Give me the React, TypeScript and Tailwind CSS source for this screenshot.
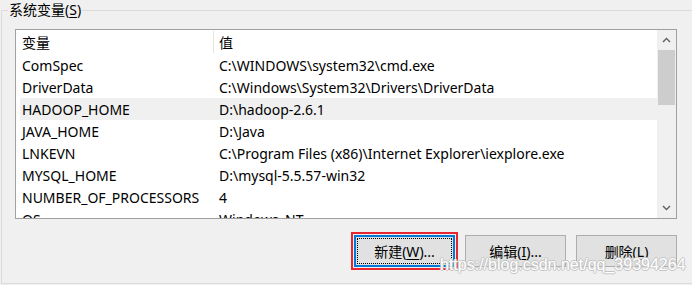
import React from "react";

const rows: [string, string][] = [
  ["ComSpec", "C:\\WINDOWS\\system32\\cmd.exe"],
  ["DriverData", "C:\\Windows\\System32\\Drivers\\DriverData"],
  ["HADOOP_HOME", "D:\\hadoop-2.6.1"],
  ["JAVA_HOME", "D:\\Java"],
  ["LNKEVN", "C:\\Program Files (x86)\\Internet Explorer\\iexplore.exe"],
  ["MYSQL_HOME", "D:\\mysql-5.5.57-win32"],
  ["NUMBER_OF_PROCESSORS", "4"],
  ["OS", "Windows_NT"],
];

const font = "font-['Noto_Sans','Noto_Sans_CJK_SC',sans-serif]";

function Chevron({ up }: { up: boolean }) {
  return (
    <svg width="9" height="6" viewBox="0 0 9 6" className="block">
      <path
        d={up ? "M1 5 L4.5 1.5 L8 5" : "M1 1 L4.5 4.5 L8 1"}
        fill="none"
        stroke="#606060"
        strokeWidth="1.4"
      />
    </svg>
  );
}

export default function App() {
  return (
    <div
      className={`relative w-[692px] h-[285px] bg-[#f0f0f0] pt-[10px] pl-[1px] overflow-hidden text-[14px] text-black ${font}`}
    >
      <div className="relative w-[700px] h-[274px] border border-[#dcdcdc] pl-[13px] pt-[18px]">
        <span className="absolute left-[6px] top-[-10px] px-[1px] bg-[#f0f0f0] leading-[18px]">
          系统变量(<span className="underline underline-offset-2">S</span>)
        </span>

        <div className="w-[662px] h-[190px] border border-[#a0a0a0] flex bg-white">
          <div className="w-[641px] h-full overflow-hidden pl-[4px]">
            <div className="flex h-[24px] leading-[22px] pt-[2px]">
              <div className="w-[193px] pl-[2px]">变量</div>
              <div className="w-px h-[22px] -mt-[1px] bg-[#e5e5e5]" />
              <div className="pl-[5px]">值</div>
            </div>
            {rows.map(([k, v], i) => (
              <div
                key={k}
                className={`flex h-[22px] leading-[20px] pt-[2px] whitespace-nowrap ${
                  i === 2 ? "bg-[#f0f0f0]" : ""
                }`}
              >
                <div className="w-[194px] pl-[2px]">{k}</div>
                <div className="pl-[5px]">{v}</div>
              </div>
            ))}
          </div>
          <div className="w-[19px] h-full bg-[#f0f0f0] flex flex-col">
            <div className="h-[20px] flex items-center justify-center">
              <Chevron up />
            </div>
            <div className="h-[55px] mx-[1px] bg-[#cdcdcd]" />
            <div className="flex-1" />
            <div className="h-[20px] flex items-center justify-center">
              <Chevron up={false} />
            </div>
          </div>
        </div>

        <div className="w-[662px] flex justify-end gap-[10px] mt-[16px]">
          <div className="relative">
            <div className="absolute -inset-[3px] border-2 border-[#e8262d]" />
            <button className="relative w-[101px] h-[32px] bg-[#e1e1e1] border-2 border-[#0078d7] flex items-center justify-center p-[1px]">
              <span className="w-full h-full border border-dotted border-black flex items-center justify-center">
                新建(<span className="underline underline-offset-2">W</span>)...
              </span>
            </button>
          </div>
          <button className="w-[101px] h-[32px] bg-[#e1e1e1] border border-[#adadad] flex items-center justify-center">
            编辑(<span className="underline underline-offset-2">I</span>)...
          </button>
          <button className="w-[101px] h-[32px] bg-[#e1e1e1] border border-[#adadad] flex items-center justify-center">
            删除(<span className="underline underline-offset-2">L</span>)
          </button>
        </div>
      </div>

      <div className="absolute left-[440px] top-[255px] font-['Liberation_Sans',sans-serif] text-[16px] leading-[20px] text-white [text-shadow:1px_0_0_#c4c4c4,-1px_0_0_#c4c4c4,0_1px_0_#c4c4c4,0_-1px_0_#c4c4c4]">
        https://blog.csdn.net/qq_39394264
      </div>
    </div>
  );
}
